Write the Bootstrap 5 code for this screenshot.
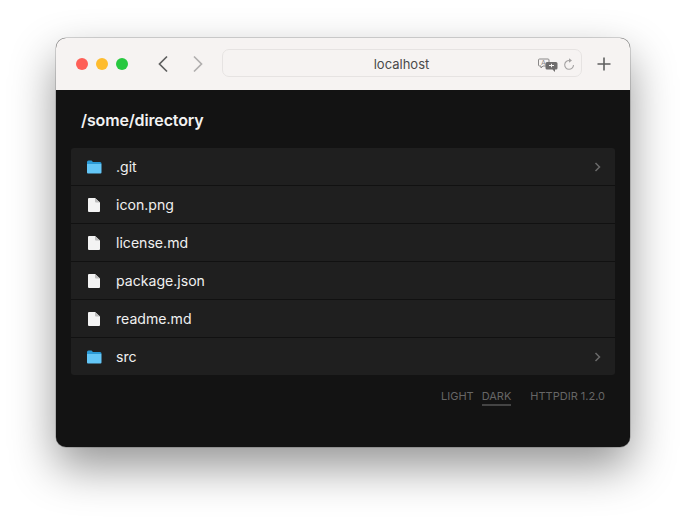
<!DOCTYPE html>
<html lang="en">
<head>
<meta charset="utf-8">
<title>httpdir</title>
<link href="https://cdn.jsdelivr.net/npm/bootstrap@5.3.0/dist/css/bootstrap.min.css" rel="stylesheet">
<style>
html,body{height:100%;background:#fff;overflow:hidden}
body{font-family:Inter,"Liberation Sans",sans-serif;padding:38px 56px 0}
.appwin{width:574px;height:409px;border-radius:10px;overflow:hidden;box-shadow:0 20px 45px rgba(0,0,0,.42),0 0 0 .5px rgba(0,0,0,.3);background:#131313}
.tbar{height:52px;background:#f6f3f2;padding:0 17px 0 20px}
.tl{width:12px;height:12px;border-radius:50%;display:block}
.urlbox{width:360px;height:28px;margin-bottom:2px;padding:3px 6px 0 5px;border:1px solid #e6e3e2;border-radius:7px;font-size:13px;color:#4a4a4a}
.urlside{width:40px}
.urltxt{flex:1;text-align:center}
.navs{margin-left:29px;margin-right:18px;gap:23px}
.plusw{margin-left:14px}
.dirhead{font-size:16px;font-weight:600;letter-spacing:-.15px;color:#f2f2f2;padding:0 25px;height:58px;line-height:60px}
.dirlist{margin:0 15px;border-radius:3px;overflow:hidden;background:#1f1f1f}
.dirrow{height:38px;border-bottom:1px solid #111;padding:0 14px 0 15px;color:#f0f0f0;font-size:14.1px;line-height:37px}
.dirrow:last-child{height:37px;border-bottom:0}
.ico{width:16px;margin-right:14px}
.dirname{flex:1}
.foot{font-size:11px;color:#666;padding-right:25px}
.foot span{display:block;height:18px;line-height:16px;margin-top:13px}
.on{border-bottom:2px solid #444;padding:0 0 1px}
.verlabel{margin-left:19px}
.xlate{margin-right:5px}
</style>
</head>
<body>
<div class="appwin d-flex flex-column">
  <div class="tbar d-flex align-items-center">
    <div class="d-flex gap-2">
      <i class="tl" style="background:#fe5f57"></i>
      <i class="tl" style="background:#febc2e"></i>
      <i class="tl" style="background:#28c840"></i>
    </div>
    <div class="navs d-flex align-items-center">
      <svg width="12" height="18" viewBox="0 0 12 18"><path d="M10 1.500 2.500 9l7.500 7.500" fill="none" stroke="#5f5f5f" stroke-width="1.700"/></svg>
      <svg width="12" height="18" viewBox="0 0 12 18"><path d="M2 1.500 9.500 9 2 16.500" fill="none" stroke="#b0aeae" stroke-width="1.700"/></svg>
    </div>
    <div class="urlbox d-flex align-items-center">
      <div class="urlside"></div>
      <div class="urltxt">localhost</div>
      <div class="urlside d-flex align-items-center justify-content-end">
        <svg width="20" height="14" viewBox="0 0 20 14" class="xlate"><path d="M1.500 1h8.500a1 1 0 0 1 1 1v5a1 1 0 0 1-1 1H5l-2 2V8H1.500a1 1 0 0 1-1-1V2a1 1 0 0 1 1-1z" fill="none" stroke="#8a8888"/><text x="3.300" y="7" font-size="6.500" fill="#8a8888" font-family="Liberation Sans">A</text><path d="M9 4h9a1.500 1.500 0 0 1 1.500 1.500V10a1.500 1.500 0 0 1-1.500 1.500h-1V14l-2.500-2.500H9A1.500 1.500 0 0 1 7.500 10V5.500A1.500 1.500 0 0 1 9 4z" fill="#6f6d6d"/><path d="M11 7.500h5M13.500 5.800v3.500" stroke="#f6f3f2"/></svg>
        <svg width="12" height="13" viewBox="0 0 12 13"><path d="M6.500 2.500A4.400 4.400 0 1 0 10.500 7" fill="none" stroke="#a5a3a3" stroke-width="1.100"/><path d="M6 .3 9 2.500 6 4.700z" fill="#a5a3a3"/></svg>
      </div>
    </div>
    <div class="plusw">
      <svg width="16" height="16" viewBox="0 0 16 16" class="d-block"><path d="M8 1.500v13M1.500 8h13" stroke="#5f5f5f" stroke-width="1.600"/></svg>
    </div>
  </div>
  <div class="dirhead">/some/directory</div>
  <div class="dirlist">
    <div class="dirrow d-flex align-items-center">
      <svg class="ico" width="16" height="14" viewBox="0 0 16 14"><path d="M1 2A1.500 1.500 0 0 1 2.500.5h3L7 2h7a1.500 1.500 0 0 1 1.500 1.500V4H1z" fill="#2a9ad6"/><path d="M1 4h14.500v8.500a1 1 0 0 1-1 1H2a1 1 0 0 1-1-1z" fill="#63c6f7"/></svg>
      <span class="dirname">.git</span>
      <svg width="7" height="10" viewBox="0 0 7 10"><path d="M1.500 1 5.500 5l-4 4" fill="none" stroke="#6a6a6a" stroke-width="1.500"/></svg>
    </div>
    <div class="dirrow d-flex align-items-center">
      <svg class="ico" width="16" height="14" viewBox="0 0 16 14"><path d="M2 1a1 1 0 0 1 1-1h6l5 4.500V13a1 1 0 0 1-1 1H3a1 1 0 0 1-1-1z" fill="#f3f3f3"/><path d="M9 0v3.500a1 1 0 0 0 1 1h4z" fill="#bdbdbd"/></svg>
      <span class="dirname">icon.png</span>
    </div>
    <div class="dirrow d-flex align-items-center">
      <svg class="ico" width="16" height="14" viewBox="0 0 16 14"><path d="M2 1a1 1 0 0 1 1-1h6l5 4.500V13a1 1 0 0 1-1 1H3a1 1 0 0 1-1-1z" fill="#f3f3f3"/><path d="M9 0v3.500a1 1 0 0 0 1 1h4z" fill="#bdbdbd"/></svg>
      <span class="dirname">license.md</span>
    </div>
    <div class="dirrow d-flex align-items-center">
      <svg class="ico" width="16" height="14" viewBox="0 0 16 14"><path d="M2 1a1 1 0 0 1 1-1h6l5 4.500V13a1 1 0 0 1-1 1H3a1 1 0 0 1-1-1z" fill="#f3f3f3"/><path d="M9 0v3.500a1 1 0 0 0 1 1h4z" fill="#bdbdbd"/></svg>
      <span class="dirname">package.json</span>
    </div>
    <div class="dirrow d-flex align-items-center">
      <svg class="ico" width="16" height="14" viewBox="0 0 16 14"><path d="M2 1a1 1 0 0 1 1-1h6l5 4.500V13a1 1 0 0 1-1 1H3a1 1 0 0 1-1-1z" fill="#f3f3f3"/><path d="M9 0v3.500a1 1 0 0 0 1 1h4z" fill="#bdbdbd"/></svg>
      <span class="dirname">readme.md</span>
    </div>
    <div class="dirrow d-flex align-items-center">
      <svg class="ico" width="16" height="14" viewBox="0 0 16 14"><path d="M1 2A1.500 1.500 0 0 1 2.500.5h3L7 2h7a1.500 1.500 0 0 1 1.500 1.500V4H1z" fill="#2a9ad6"/><path d="M1 4h14.500v8.500a1 1 0 0 1-1 1H2a1 1 0 0 1-1-1z" fill="#63c6f7"/></svg>
      <span class="dirname">src</span>
      <svg width="7" height="10" viewBox="0 0 7 10"><path d="M1.500 1 5.500 5l-4 4" fill="none" stroke="#6a6a6a" stroke-width="1.500"/></svg>
    </div>
  </div>
  <div class="foot d-flex justify-content-end">
    <span>LIGHT</span>
    <span class="on ms-2">DARK</span>
    <span class="verlabel">HTTPDIR 1.2.0</span>
  </div>
</div>
<script src="https://cdn.jsdelivr.net/npm/bootstrap@5.3.0/dist/js/bootstrap.bundle.min.js"></script>
</body>
</html>
